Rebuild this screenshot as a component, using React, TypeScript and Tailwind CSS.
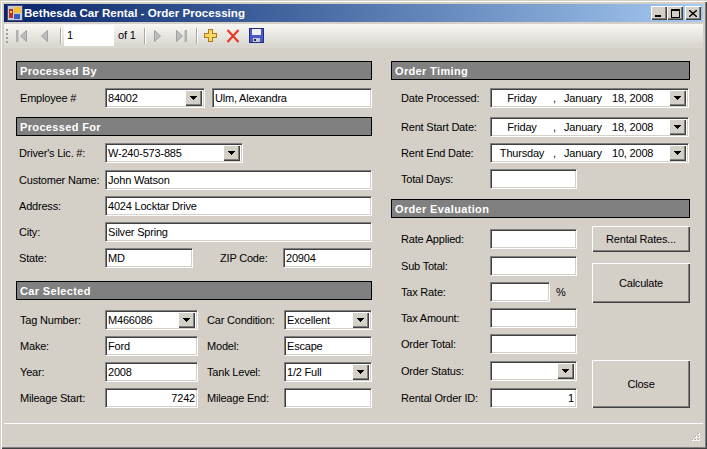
import React from "react";

const sunken = "border border-t-[#808080] border-l-[#808080] border-r-white border-b-white shadow-[inset_1px_1px_0_#404040,inset_-1px_-1px_0_#d4d0c8]";
const raised = "bg-[#d4d0c8] shadow-[inset_1px_1px_0_#ffffff,inset_-1px_-1px_0_#404040,inset_-2px_-2px_0_#808080]";

function Arrow() {
  return (
    <span className={`${raised} w-[17px] h-[16px] shrink-0 flex items-center justify-center`}>
      <svg width="7" height="4" viewBox="0 0 7 4" shapeRendering="crispEdges"><path d="M0 0h7v1H6v1H5v1H4v1H3V3H2V2H1V1H0z" fill="#000" /></svg>
    </span>
  );
}

function Field({ w, value = "", right = false, className = "" }: { w: string; value?: string; right?: boolean; className?: string }) {
  return (
    <div className={`${sunken} ${w} h-[20px] bg-white shrink-0 flex items-center px-[2px] text-black ${right ? "justify-end" : ""} ${className}`}>
      <span className="whitespace-pre">{value}</span>
    </div>
  );
}

function Combo({ w, value = "", className = "" }: { w: string; value?: string; className?: string }) {
  return (
    <div className={`${sunken} ${w} h-[20px] bg-white shrink-0 flex items-center justify-between pl-[2px] pr-[2px] text-black ${className}`}>
      <span className="whitespace-pre">{value}</span>
      <Arrow />
    </div>
  );
}

function DateField({ day, date }: { day: string; date: string }) {
  return (
    <div className={`${sunken} w-[199px] h-[20px] bg-white shrink-0 flex items-center pr-[2px] text-black`}>
      <span className="w-[62px] text-center">{day}</span>
      <span className="w-[11px]">,</span>
      <span className="w-[48px]">January</span>
      <span className="flex-1">{date}</span>
      <Arrow />
    </div>
  );
}

function Header({ children, className = "" }: { children: React.ReactNode; className?: string }) {
  return (
    <div className={`h-[19px] bg-[#808080] border border-black flex items-center pl-[3px] pt-[1px] text-white font-bold text-[11px] tracking-[0.35px] ${className}`}>
      {children}
    </div>
  );
}

function Row({ className = "", children }: { className?: string; children: React.ReactNode }) {
  return <div className={`flex items-center h-[20px] whitespace-nowrap ${className}`}>{children}</div>;
}

function Sep({ className = "" }: { className?: string }) {
  return <span className={`w-[2px] h-[16px] bg-gradient-to-r from-[#a8a8a8] from-50% to-white to-50% shrink-0 ${className}`} />;
}

function Nav({ dir, bar = false, className = "" }: { dir: "l" | "r"; bar?: boolean; className?: string }) {
  const w = bar ? 11 : 7;
  return (
    <svg width={w} height="12" viewBox={`0 0 ${w} 12`} className={`shrink-0 ${className}`}>
      {dir === "l" ? (
        <>
          {bar && <rect x="0" y="0" width="2.5" height="12" fill="#b0b0b0" />}
          <path d={`M${w - 0.5} 0.5v11L${w - 6.5} 6z`} fill="#bcbcbc" stroke="#a0a0a0" />
        </>
      ) : (
        <>
          {bar && <rect x="8.5" y="0" width="2.5" height="12" fill="#b0b0b0" />}
          <path d="M0.5 0.5v11L6.5 6z" fill="#bcbcbc" stroke="#a0a0a0" />
        </>
      )}
    </svg>
  );
}

function WinBtn({ children, className = "" }: { children: React.ReactNode; className?: string }) {
  return (
    <span className={`${raised} w-[16px] h-[14px] flex items-center justify-center ${className}`}>{children}</span>
  );
}

function PushButton({ label, className = "" }: { label: string; className?: string }) {
  return (
    <div className={`${raised} w-[98px] flex items-center justify-center text-black shrink-0 ${className}`}>{label}</div>
  );
}

export default function App() {
  return (
    <div className="w-[707px] h-[449px] bg-[#d4d0c8] p-[4px] text-[11px] tracking-[-0.2px] text-black leading-none overflow-hidden shadow-[inset_1px_1px_0_#d4d0c8,inset_2px_2px_0_#ffffff,inset_-1px_-1px_0_#404040,inset_-2px_-2px_0_#808080]" style={{ fontFamily: '"Liberation Sans", Arial, sans-serif' }}>
      <div className="h-[18px] bg-gradient-to-r from-[#0a246a] to-[#a6caf0] flex items-center pl-[3px] pr-[2px]">
        <svg width="16" height="16" viewBox="0 0 16 16" shapeRendering="crispEdges" className="shrink-0">
          <rect x="0.5" y="0.5" width="15" height="15" fill="#c8c8d8" stroke="#3a4a80" />
          <rect x="2" y="4" width="4" height="9" fill="#c03020" />
          <rect x="3" y="6" width="2" height="2" fill="#f0d040" />
          <rect x="7" y="2" width="7" height="6" fill="#f0c030" />
          <rect x="7" y="9" width="6" height="5" fill="#3060c0" />
        </svg>
        <span className="ml-[1px] text-white font-bold text-[11.6px] tracking-normal">Bethesda Car Rental - Order Processing</span>
        <div className="ml-auto flex">
          <WinBtn>
            <span className="w-[6px] h-[2px] bg-black mt-[6px] mr-[2px]" />
          </WinBtn>
          <WinBtn>
            <span className="w-[9px] h-[9px] border border-black border-t-2" />
          </WinBtn>
          <WinBtn className="ml-[2px]">
            <svg width="8" height="7" viewBox="0 0 8 7"><path d="M0 0l8 7M8 0L0 7" stroke="#000" strokeWidth="1.4" /></svg>
          </WinBtn>
        </div>
      </div>
      <div className="mt-[2px] h-[24px] bg-gradient-to-b from-[#f8f7f4] to-[#d8d5cd] flex items-center border-b border-[#dcd9d2]">
        <span className="ml-[2px] w-[2px] h-[14px] bg-[repeating-linear-gradient(to_bottom,#a0a0a0_0,#a0a0a0_2px,transparent_2px,transparent_4px)] shrink-0" />
        <Nav dir="l" bar className="ml-[8px]" />
        <Nav dir="l" className="ml-[14px]" />
        <Sep className="ml-[12px]" />
        <div className="w-[50px] h-[21px] bg-white flex items-center pl-[3px] text-black ml-[2px] shrink-0">1</div>
        <span className="ml-[4px] w-[18px] text-black shrink-0 whitespace-nowrap">of 1</span>
        <Sep className="ml-[8px]" />
        <Nav dir="r" className="ml-[8px]" />
        <Nav dir="r" bar className="ml-[15px]" />
        <Sep className="ml-[9px]" />
        <svg width="13" height="13" viewBox="0 0 13 13" shapeRendering="crispEdges" className="ml-[6px] shrink-0">
          <path d="M4.5 .5h4v4h4v4h-4v4h-4v-4h-4v-4h4z" fill="#f8d860" stroke="#a87c18" />
        </svg>
        <svg width="14" height="14" viewBox="0 0 14 14" className="ml-[9px] shrink-0">
          <path d="M1.5 1l11 12M12.5 1L1.5 13" stroke="#e83a28" strokeWidth="2.2" />
        </svg>
        <svg width="15" height="15" viewBox="0 0 15 15" shapeRendering="crispEdges" className="ml-[9px] shrink-0">
          <rect x="0.5" y="0.5" width="14" height="14" fill="#4858c8" stroke="#202c88" />
          <rect x="3" y="1" width="9" height="6" fill="#eeeef8" />
          <rect x="4" y="10" width="7" height="4" fill="#c8c8d0" />
          <rect x="5" y="11" width="2" height="2" fill="#282838" />
        </svg>
      </div>
      <div className="flex pl-[12px] pt-[13px]">
        <div className="w-[356px] shrink-0">
          <Header>Processed By</Header>
          <Row className="mt-[8px] pl-[4px]">
            <span className="w-[85px]">Employee #</span>
            <Combo w="w-[100px]" value="84002" />
            <Field w="w-[160px]" value="Ulm, Alexandra" className="ml-[7px]" />
          </Row>
          <Header className="mt-[9px]">Processed For</Header>
          <Row className="mt-[7px] pl-[3px]">
            <span className="w-[86px]">Driver's Lic. #:</span>
            <Combo w="w-[138px]" value="W-240-573-885" />
          </Row>
          <Row className="mt-[7px] pl-[3px]">
            <span className="w-[86px]">Customer Name:</span>
            <Field w="w-[267px]" value="John Watson" />
          </Row>
          <Row className="mt-[6px] pl-[3px]">
            <span className="w-[86px]">Address:</span>
            <Field w="w-[267px]" value="4024 Locktar Drive" />
          </Row>
          <Row className="mt-[6px] pl-[3px]">
            <span className="w-[86px]">City:</span>
            <Field w="w-[267px]" value="Silver Spring" />
          </Row>
          <Row className="mt-[6px] pl-[3px]">
            <span className="w-[86px]">State:</span>
            <Field w="w-[88px]" value="MD" />
            <span className="ml-[27px] w-[63px]">ZIP Code:</span>
            <Field w="w-[89px]" value="20904" />
          </Row>
          <Header className="mt-[13px]">Car Selected</Header>
          <Row className="mt-[10px] pl-[4px]">
            <span className="w-[85px]">Tag Number:</span>
            <Combo w="w-[93px]" value="M466086" />
            <span className="ml-[9px] w-[77px]">Car Condition:</span>
            <Combo w="w-[88px]" value="Excellent" />
          </Row>
          <Row className="mt-[6px] pl-[4px]">
            <span className="w-[85px]">Make:</span>
            <Field w="w-[93px]" value="Ford" />
            <span className="ml-[9px] w-[77px]">Model:</span>
            <Field w="w-[88px]" value="Escape" />
          </Row>
          <Row className="mt-[6px] pl-[4px]">
            <span className="w-[85px]">Year:</span>
            <Field w="w-[93px]" value="2008" />
            <span className="ml-[9px] w-[77px]">Tank Level:</span>
            <Combo w="w-[88px]" value="1/2 Full" />
          </Row>
          <Row className="mt-[6px] pl-[4px]">
            <span className="w-[85px]">Mileage Start:</span>
            <Field w="w-[93px]" value="7242" right />
            <span className="ml-[9px] w-[77px]">Mileage End:</span>
            <Field w="w-[88px]" />
          </Row>
        </div>
        <div className="w-[299px] shrink-0 ml-[19px]">
          <Header>Order Timing</Header>
          <Row className="mt-[8px] pl-[10px]">
            <span className="w-[89px]">Date Processed:</span>
            <DateField day="Friday" date="18, 2008" />
          </Row>
          <Row className="mt-[9px] pl-[10px]">
            <span className="w-[89px]">Rent Start Date:</span>
            <DateField day="Friday" date="18, 2008" />
          </Row>
          <Row className="mt-[6px] pl-[10px]">
            <span className="w-[89px]">Rent End Date:</span>
            <DateField day="Thursday" date="10, 2008" />
          </Row>
          <Row className="mt-[6px] pl-[10px]">
            <span className="w-[89px]">Total Days:</span>
            <Field w="w-[87px]" />
          </Row>
          <Header className="mt-[10px]">Order Evaluation</Header>
          <div className="flex">
            <div className="w-[201px] shrink-0">
              <Row className="mt-[11px] pl-[10px]">
                <span className="w-[89px]">Rate Applied:</span>
                <Field w="w-[87px]" />
              </Row>
              <Row className="mt-[7px] pl-[10px]">
                <span className="w-[89px]">Sub Total:</span>
                <Field w="w-[87px]" />
              </Row>
              <Row className="mt-[6px] pl-[10px]">
                <span className="w-[89px]">Tax Rate:</span>
                <Field w="w-[60px]" />
                <span className="ml-[6px]">%</span>
              </Row>
              <Row className="mt-[6px] pl-[10px]">
                <span className="w-[89px]">Tax Amount:</span>
                <Field w="w-[87px]" />
              </Row>
              <Row className="mt-[6px] pl-[10px]">
                <span className="w-[89px]">Order Total:</span>
                <Field w="w-[87px]" />
              </Row>
              <Row className="mt-[7px] pl-[10px]">
                <span className="w-[89px]">Order Status:</span>
                <Combo w="w-[87px]" />
              </Row>
              <Row className="mt-[7px] pl-[10px]">
                <span className="w-[89px]">Rental Order ID:</span>
                <Field w="w-[87px]" value="1" right />
              </Row>
            </div>
            <div className="flex flex-col">
              <PushButton label="Rental Rates..." className="mt-[8px] h-[26px]" />
              <PushButton label="Calculate" className="mt-[11px] h-[40px]" />
              <PushButton label="Close" className="mt-[57px] h-[48px]" />
            </div>
          </div>
        </div>
      </div>
      <div className="mt-[15px] border-t border-white h-[22px] relative">
        <svg width="12" height="12" viewBox="0 0 12 12" shapeRendering="crispEdges" className="absolute right-[2px] bottom-[1px]">
          <path d="M9 1h2v2H9zM6 4h2v2H6zM9 4h2v2H9zM3 7h2v2H3zM6 7h2v2H6zM9 7h2v2H9z" fill="#fff" />
          <path d="M9 1h1v1H9zM6 4h1v1H6zM9 4h1v1H9zM3 7h1v1H3zM6 7h1v1H6zM9 7h1v1H9z" fill="#a0a0a0" />
        </svg>
      </div>
    </div>
  );
}
